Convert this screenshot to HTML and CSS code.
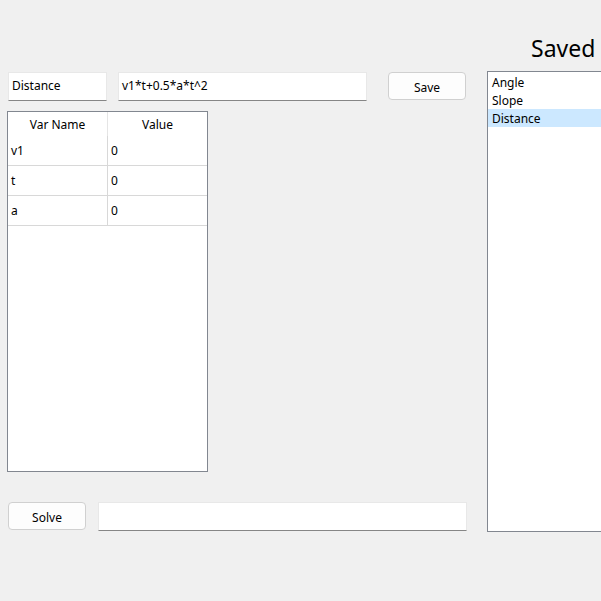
FILE: index.html
```html
<!DOCTYPE html>
<html>
<head>
<meta charset="utf-8">
<link rel="stylesheet" href="styles.css">
</head>
<body>
<div class="window">
  <div class="left">
    <div class="row-top">
      <div class="textbox tb-name">Distance</div>
      <div class="textbox tb-expr">v1*t+0.5*a*t^2</div>
      <div class="button btn-save">Save</div>
    </div>
    <div class="grid">
      <div class="grid-head">
        <div class="cell c1">Var Name</div>
        <div class="cell c2">Value</div>
      </div>
      <div class="grid-row">
        <div class="cell c1">v1</div>
        <div class="cell c2">0</div>
      </div>
      <div class="grid-row">
        <div class="cell c1">t</div>
        <div class="cell c2">0</div>
      </div>
      <div class="grid-row">
        <div class="cell c1">a</div>
        <div class="cell c2">0</div>
      </div>
    </div>
    <div class="row-bottom">
      <div class="button btn-solve">Solve</div>
      <div class="textbox tb-result"></div>
    </div>
  </div>
  <div class="right">
    <div class="title">Saved</div>
    <div class="listbox">
      <div class="item">Angle</div>
      <div class="item">Slope</div>
      <div class="item selected">Distance</div>
    </div>
  </div>
</div>
</body>
</html>
```
FILE: styles.css
```css
html, body {
  margin: 0;
  padding: 0;
  width: 601px;
  height: 601px;
  overflow: hidden;
  background: #f0f0f0;
  font-family: "Noto Sans", "Open Sans", sans-serif;
  font-size: 12px;
  color: #000;
}

.window {
  display: flex;
  width: 601px;
  height: 601px;
  overflow: hidden;
}

.left {
  flex: 0 0 467px;
  padding: 72px 0 0 8px;
  box-sizing: border-box;
  display: flex;
  flex-direction: column;
}

.row-top {
  display: flex;
  align-items: flex-start;
  height: 29px;
}

.textbox {
  background: #fff;
  border: 1px solid #e8e8e8;
  border-bottom-color: #868686;
  box-sizing: border-box;
  height: 29px;
  padding-left: 3px;
  padding-bottom: 1px;
  display: flex;
  align-items: center;
  line-height: 16px;
}

.tb-name { width: 99px; }
.tb-expr { width: 249px; margin-left: 11px; }

.button {
  background: #fdfdfd;
  border: 1px solid #d0d0d0;
  border-radius: 4px;
  box-sizing: border-box;
  width: 78px;
  height: 28px;
  display: flex;
  align-items: center;
  justify-content: center;
  padding-top: 2px;
}

.btn-save { margin-left: 21px; }

.grid {
  margin-top: 10px;
  margin-left: -1px;
  width: 201px;
  height: 361px;
  box-sizing: border-box;
  border: 1px solid #828790;
  background: #fff;
}

.grid-head, .grid-row {
  display: flex;
}

.grid-head { height: 24px; }
.grid-head .cell {
  justify-content: center;
  border-right-color: #e5e5e5;
}

.grid-row {
  height: 30px;
  box-sizing: border-box;
  border-bottom: 1px solid #d8d8d8;
}

.cell {
  display: flex;
  align-items: center;
  box-sizing: border-box;
}

.c1 {
  width: 100px;
  border-right: 1px solid #d8d8d8;
  padding-left: 3px;
}

.c2 {
  flex: 1;
  padding-left: 3px;
}

.grid-head .c1, .grid-head .c2 { padding-left: 0; }

.row-bottom {
  margin-top: 30px;
  display: flex;
  align-items: flex-start;
}

.tb-result { width: 369px; margin-left: 12px; }

.right {
  flex: 0 0 auto;
  margin-left: 20px;
  display: flex;
  flex-direction: column;
}

.title {
  margin-left: 44px;
  margin-top: 33px;
  height: 38px;
  font-size: 23px;
  line-height: 30px;
}

.listbox {
  width: 160px;
  height: 461px;
  box-sizing: border-box;
  border: 1px solid #828790;
  background: #fff;
  padding-top: 1px;
}

.item {
  height: 18px;
  line-height: 20px;
  padding-left: 4px;
}

.item.selected { background: #cce8ff; }
```
